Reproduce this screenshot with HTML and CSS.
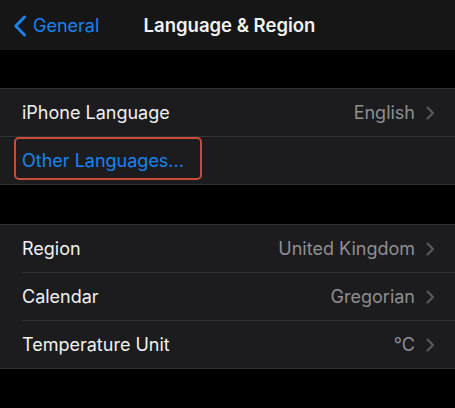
FILE: index.html
```html
<!DOCTYPE html>
<html lang="en">
<head>
<meta charset="utf-8">
<title>Language &amp; Region</title>
<link rel="stylesheet" href="styles.css">
</head>
<body>
<header class="nav">
  <a class="back">
    <svg class="back-icon" width="14" height="22" viewBox="0 0 14 22" aria-hidden="true">
      <path d="M11.5 2 L2.8 11 L11.5 20" fill="none" stroke="#1a82f0" stroke-width="3" stroke-linecap="round" stroke-linejoin="round"/>
    </svg>
    <span>General</span>
  </a>
  <h1 class="title">Language &amp; Region</h1>
  <span></span>
</header>

<section class="group group-full">
  <div class="row">
    <span class="label">iPhone Language</span>
    <span class="value">English</span>
    <svg class="chev" width="9" height="14" viewBox="0 0 9 14" aria-hidden="true"><path d="M1.5 1.5 L7 7 L1.5 12.5" fill="none" stroke="#5b5b5f" stroke-width="2" stroke-linecap="round" stroke-linejoin="round"/></svg>
  </div>
  <div class="row row-hl">
    <span class="label link">Other Languages...</span>
    <span class="highlight"></span>
  </div>
</section>

<section class="group group-inset">
  <div class="row">
    <span class="label">Region</span>
    <span class="value">United Kingdom</span>
    <svg class="chev" width="9" height="14" viewBox="0 0 9 14" aria-hidden="true"><path d="M1.5 1.5 L7 7 L1.5 12.5" fill="none" stroke="#5b5b5f" stroke-width="2" stroke-linecap="round" stroke-linejoin="round"/></svg>
  </div>
  <div class="row">
    <span class="label">Calendar</span>
    <span class="value">Gregorian</span>
    <svg class="chev" width="9" height="14" viewBox="0 0 9 14" aria-hidden="true"><path d="M1.5 1.5 L7 7 L1.5 12.5" fill="none" stroke="#5b5b5f" stroke-width="2" stroke-linecap="round" stroke-linejoin="round"/></svg>
  </div>
  <div class="row">
    <span class="label">Temperature Unit</span>
    <span class="value">°C</span>
    <svg class="chev" width="9" height="14" viewBox="0 0 9 14" aria-hidden="true"><path d="M1.5 1.5 L7 7 L1.5 12.5" fill="none" stroke="#5b5b5f" stroke-width="2" stroke-linecap="round" stroke-linejoin="round"/></svg>
  </div>
</section>
</body>
</html>
```

FILE: styles.css
```css
html, body {
  margin: 0;
  padding: 0;
  background: #000;
  width: 455px;
  height: 408px;
  overflow: hidden;
  font-family: Inter, "Noto Sans", "Liberation Sans", sans-serif;
  -webkit-font-smoothing: antialiased;
}

.nav {
  height: 50px;
  background: #161616;
  display: grid;
  grid-template-columns: 1fr auto 1fr;
  align-items: center;
  margin-bottom: 38px;
}

.back {
  display: flex;
  align-items: center;
  gap: 6px;
  padding-left: 13px;
  color: #1a82f0;
  font-size: 18px;
}

.back-icon {
  display: block;
  margin-top: 1px;
}

.title {
  margin: 0;
  color: #f2f2f2;
  font-size: 18.5px;
  font-weight: 600;
  padding-left: 4px;
}

.group {
  background: #1c1c1e;
  border-top: 1px solid #323234;
  border-bottom: 1px solid #323234;
  margin-bottom: 39px;
}

.row {
  position: relative;
  height: 47px;
  display: flex;
  align-items: center;
  padding: 0 20px 0 22px;
  color: #f0f0f0;
  font-size: 18px;
}

.group-full .row + .row {
  border-top: 1px solid #323234;
}

.group-inset .row + .row::before {
  content: "";
  position: absolute;
  top: -1px;
  left: 22px;
  right: 0;
  height: 1px;
  background: #323234;
}
.group-inset .row + .row {
  margin-top: 1px;
}

.label {
  flex: 1;
}

.link {
  color: #1a82f0;
}

.value {
  color: #8e8e93;
  margin-right: 11px;
}

.chev {
  display: block;
}

.highlight {
  position: absolute;
  left: 14px;
  top: 0;
  width: 188px;
  height: 43px;
  box-sizing: border-box;
  border: 2px solid #c84b3b;
  border-radius: 5px;
}
```
